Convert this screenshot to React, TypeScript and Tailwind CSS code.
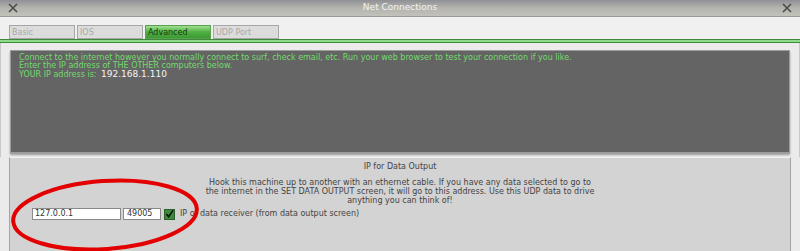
import React from "react";

const tabs = [
  { name: "Basic", active: false },
  { name: "IOS", active: false },
  { name: "Advanced", active: true },
  { name: "UDP Port", active: false },
];

function CloseX() {
  return (
    <svg width="10" height="10" viewBox="0 0 10 10">
      <path d="M1 1 L9 9 M9 1 L1 9" stroke="#4a4a48" strokeWidth="1.6" />
    </svg>
  );
}

export default function App() {
  return (
    <div className="relative w-[800px] h-[251px] overflow-hidden bg-[#ebebeb] font-['DejaVu_Sans',sans-serif] text-[8px]">
      {/* Title bar */}
      <div className="h-[17px] flex items-center justify-between px-[8px] bg-gradient-to-b from-[#8e9096] via-[#b4b4ae] to-[#c2c2bb] border-b border-[#9a9a94]">
        <CloseX />
        <span className="text-[#f2f2f2] text-[9px]">Net Connections</span>
        <CloseX />
      </div>

      {/* Tabs */}
      <div className="flex gap-[2px] pl-[9px] pt-[8px] bg-[#f0f0f0]">
        {tabs.map((t) =>
          t.active ? (
            <div
              key={t.name}
              className="w-[66px] h-[14px] px-[2px] leading-[13px] text-[#1b3a12] bg-gradient-to-b from-[#9fe08f] via-[#4fb043] to-[#3c9a34] border border-[#5aa050]"
            >
              {t.name}
            </div>
          ) : (
            <div
              key={t.name}
              className="w-[66px] h-[14px] px-[2px] leading-[13px] text-[#a9a9a9] bg-[#dcdcdc] border border-[#a6a6a6]"
            >
              {t.name}
            </div>
          )
        )}
      </div>
      <div className="h-[4px] bg-[#8fd98a] border-y border-[#3f8a3a]" />

      {/* Info panel */}
      <div className="px-[9px] pt-[7px] pb-[4px] border-x border-[#c8c8c8]">
        <div className="h-[103px] bg-[#646464] border border-[#9c9c9c] shadow-[0_2px_2px_rgba(0,0,0,0.35)] px-[8px] pt-[3px] leading-[8px] text-[#72db6c]">
          <div>
            Connect to the internet however you normally connect to surf, check email, etc. Run your web browser to test your connection if you like.
          </div>
          <div>Enter the IP address of THE OTHER computers below.</div>
          <div>
            YOUR IP address is: <span className="text-[#f4f4f4] text-[9px] ml-[2px]">192.168.1.110</span>
          </div>
        </div>
      </div>

      {/* Data output panel */}
      <div className="px-[9px]">
        <div className="h-[100px] bg-[#d3d3d3] border border-[#a3a3a3] border-t-[#f2f2f2] pt-[4px] text-[#444444]">
          <div className="text-center leading-[10px]">IP for Data Output</div>
          <div className="mt-[6px] text-center leading-[9px]">
            <div>Hook this machine up to another with an ethernet cable. If you have any data selected to go to</div>
            <div>the internet in the SET DATA OUTPUT screen, it will go to this address. Use this UDP data to drive</div>
            <div>anything you can think of!</div>
          </div>
          <div className="flex items-center mt-[3px] pl-[22px] gap-[2px]">
            <div className="w-[89px] h-[12px] bg-white border border-[#8a8a8a] px-[2px] leading-[10px] text-[#333]">127.0.0.1</div>
            <div className="w-[38px] h-[12px] bg-white border border-[#8a8a8a] px-[3px] leading-[10px] text-[#333]">49005</div>
            <div className="w-[11px] h-[11px] ml-[1px] bg-[#3d8a3a] border border-[#2b5e29] flex items-center justify-center">
              <svg width="10" height="10" viewBox="0 0 10 10">
                <path d="M1.5 5 L4 8 L9 1" stroke="#111" strokeWidth="1.8" fill="none" />
              </svg>
            </div>
            <span className="ml-[3px]">IP of data receiver (from data output screen)</span>
          </div>
        </div>
      </div>

      {/* Red highlight ellipse */}
      <svg className="absolute left-0 top-0 pointer-events-none" width="800" height="251">
        <ellipse cx="105" cy="215" rx="92" ry="34" fill="none" stroke="#e30000" strokeWidth="4" transform="rotate(-4 105 215)" />
      </svg>
    </div>
  );
}
